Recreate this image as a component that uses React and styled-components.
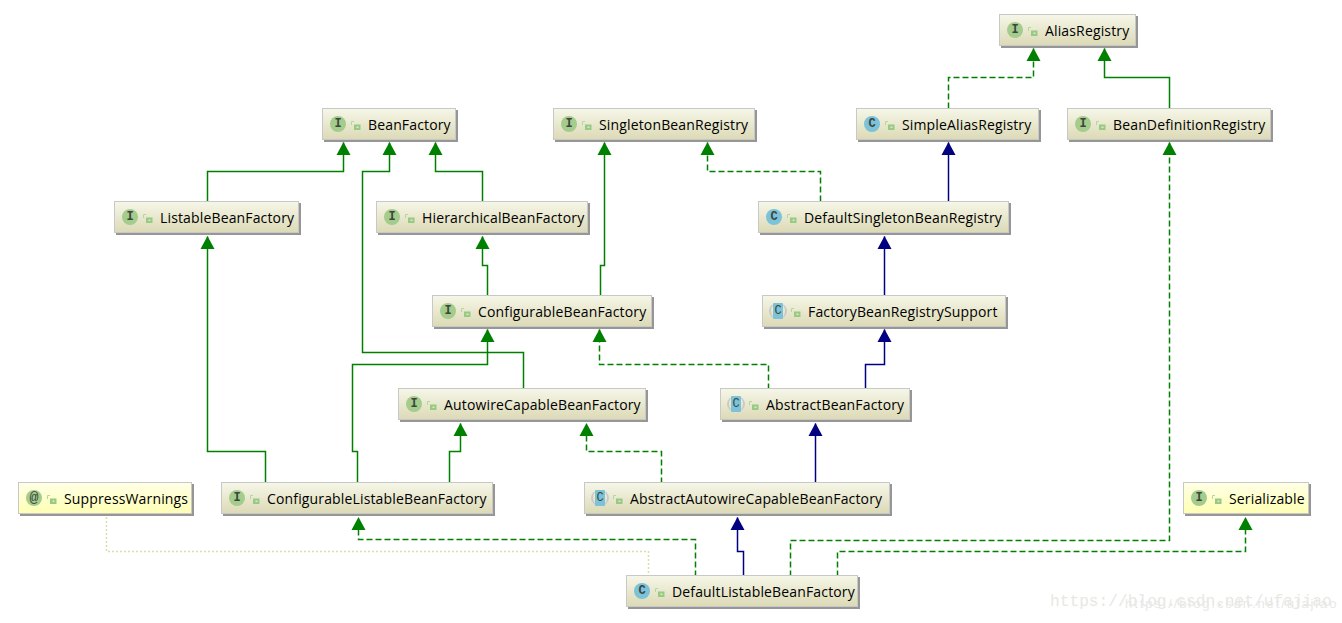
import React from "react";
import styled, { createGlobalStyle } from "styled-components";

const GREEN = "#008000";
const BLUE = "#000080";
const OLIVE = "#bcbc55";

const nodes = [
  { name: "AliasRegistry", kind: "I", x: 999, y: 14, w: 137 },
  { name: "BeanFactory", kind: "I", x: 322, y: 108, w: 134 },
  { name: "SingletonBeanRegistry", kind: "I", x: 553, y: 108, w: 202 },
  { name: "SimpleAliasRegistry", kind: "C", x: 856, y: 108, w: 183 },
  { name: "BeanDefinitionRegistry", kind: "I", x: 1067, y: 108, w: 204 },
  { name: "ListableBeanFactory", kind: "I", x: 114, y: 201, w: 185 },
  { name: "HierarchicalBeanFactory", kind: "I", x: 376, y: 201, w: 212 },
  { name: "DefaultSingletonBeanRegistry", kind: "C", x: 758, y: 201, w: 251 },
  { name: "ConfigurableBeanFactory", kind: "I", x: 432, y: 295, w: 220 },
  { name: "FactoryBeanRegistrySupport", kind: "A", x: 762, y: 295, w: 244 },
  { name: "AutowireCapableBeanFactory", kind: "I", x: 398, y: 388, w: 248 },
  { name: "AbstractBeanFactory", kind: "A", x: 720, y: 388, w: 190 },
  { name: "SuppressWarnings", kind: "@", x: 18, y: 482, w: 174, note: true },
  { name: "ConfigurableListableBeanFactory", kind: "I", x: 221, y: 482, w: 272 },
  { name: "AbstractAutowireCapableBeanFactory", kind: "A", x: 584, y: 482, w: 306 },
  { name: "Serializable", kind: "I", x: 1183, y: 482, w: 126, note: true },
  { name: "DefaultListableBeanFactory", kind: "C", x: 626, y: 575, w: 232 },
];

// every edge runs from the child box up to the arrow tip under the parent
const edges = [
  { c: GREEN, dash: true, p: "948,108 948,77 1033,77 1033,48" },
  { c: GREEN, p: "1169,108 1169,77 1104,77 1104,48" },
  { c: GREEN, p: "207,201 207,171 343,171 343,142" },
  { c: GREEN, p: "523,389 523,352 362,352 362,171 389,171 389,142" },
  { c: GREEN, p: "482,201 482,171 435,171 435,142" },
  { c: GREEN, p: "600,295 600,265 604,265 604,142" },
  { c: GREEN, dash: true, p: "820,201 820,171 707,171 707,142" },
  { c: BLUE, p: "948,201 948,142" },
  { c: GREEN, dash: true, p: "790,576 790,540 1169,540 1169,142" },
  { c: BLUE, p: "884,295 884,236" },
  { c: GREEN, p: "487,295 487,265 482,265 482,236" },
  { c: GREEN, p: "265,483 265,451 207,451 207,236" },
  { c: GREEN, dash: true, p: "768,389 768,364 599,364 599,329" },
  { c: BLUE, p: "865,389 865,364 884,364 884,329" },
  { c: GREEN, p: "357,483 357,451 352,451 352,364 487,364 487,329" },
  { c: GREEN, p: "449,483 449,451 460,451 460,423" },
  { c: GREEN, dash: true, p: "661,483 661,451 586,451 586,423" },
  { c: BLUE, p: "815,483 815,423" },
  { c: BLUE, p: "743,576 743,551 737,551 737,517" },
  { c: GREEN, dash: true, p: "695,576 695,539 358,539 358,517" },
  { c: GREEN, dash: true, p: "837,576 837,551 1245,551 1245,517" },
  { c: OLIVE, dot: true, noArrow: true, p: "106,517 106,551 648,551 648,576" },
];

const GlobalStyle = createGlobalStyle`
  html, body {
    margin: 0;
    background: #ffffff;
  }
`;

const Canvas = styled.div`
  position: relative;
  width: 1342px;
  height: 623px;
  overflow: hidden;
  font-family: "Open Sans", sans-serif;
`;

const Edges = styled.svg`
  position: absolute;
  left: 0;
  top: 0;
`;

const Box = styled.div`
  position: absolute;
  left: ${(p) => p.$x}px;
  top: ${(p) => p.$y}px;
  width: ${(p) => p.$w}px;
  height: 32px;
  box-sizing: border-box;
  display: flex;
  align-items: center;
  padding-left: 6px;
  border: 1px solid #c8c8c8;
  box-shadow: 2px 2px 0 #969696;
  background: ${(p) =>
    p.$note
      ? "linear-gradient(#ffffe6, #ffffb4)"
      : "linear-gradient(#f6f6e8, #dcdab6)"};
`;

const Badge = styled.span`
  width: 16px;
  height: 16px;
  flex: none;
  display: flex;
  align-items: center;
  justify-content: center;
  border-radius: 50%;
  background: ${(p) => p.$bg};
  color: #3c463c;
  font-family: "Liberation Mono", monospace;
  font-size: ${(p) => (p.$at ? "15px" : "12px")};
  font-weight: ${(p) => (p.$at ? "normal" : "bold")};
`;

const BadgeSlot = styled.span`
  position: relative;
  width: 16px;
  height: 16px;
  margin-left: 1px;
  flex: none;
  display: flex;
  justify-content: center;
`;

const AbstractRing = styled.span`
  position: absolute;
  left: -1px;
  top: 0;
  width: 18px;
  height: 16px;
  box-sizing: border-box;
  border-radius: 50%;
  border-left: 2px solid #cacaca;
  border-right: 2px solid #cacaca;
`;

const AbstractFace = styled(Badge)`
  position: relative;
  width: 10px;
  border-radius: 1px;
  font-weight: normal;
`;

const Lock = styled.svg`
  margin: 3px 7px 0 5px;
  flex: none;
`;

const Name = styled.span`
  padding-top: 1px;
  font-size: 14px;
  letter-spacing: 0.15px;
  color: #000000;
  white-space: nowrap;
`;

const Watermark = styled.span`
  position: absolute;
  left: ${(p) => p.$x}px;
  top: ${(p) => p.$y}px;
  font-family: ${(p) => p.$font};
  font-size: ${(p) => p.$size}px;
  letter-spacing: ${(p) => p.$track}px;
  color: ${(p) => p.$color};
  white-space: nowrap;
`;

function KindIcon({ kind }) {
  if (kind === "A") {
    return (
      <BadgeSlot>
        <AbstractRing />
        <AbstractFace $bg="#7cc2d8">C</AbstractFace>
      </BadgeSlot>
    );
  }
  const bg = kind === "C" ? "#7cc2d8" : "#a4cc8c";
  return (
    <BadgeSlot>
      <Badge $bg={bg} $at={kind === "@"}>
        {kind}
      </Badge>
    </BadgeSlot>
  );
}

function LockIcon() {
  return (
    <Lock width="10" height="10" viewBox="0 0 10 10">
      <path d="M0.5 4V0.5H3" fill="none" stroke="#b4d6a0" strokeWidth="1" />
      <rect x="3" y="3.5" width="6.5" height="5.5" fill="#98ca84" />
      <rect x="5.5" y="5.5" width="2" height="1.5" fill="#d8ecc8" />
    </Lock>
  );
}

function Edge({ edge }) {
  const pts = edge.p.split(" ");
  const [tx, ty] = pts[pts.length - 1].split(",").map(Number);
  const dash = edge.dash ? "6 3" : edge.dot ? "1 3" : undefined;
  return (
    <g>
      <polyline
        points={edge.p}
        transform="translate(0.5 0.5)"
        fill="none"
        stroke={edge.c}
        strokeWidth="1.5"
        strokeDasharray={dash}
      />
      {!edge.noArrow && (
        <polygon
          points={`${tx + 0.5},${ty} ${tx - 6.5},${ty + 13} ${tx + 7.5},${ty + 13}`}
          fill={edge.c}
        />
      )}
    </g>
  );
}

export default function App() {
  return (
    <Canvas>
      <GlobalStyle />
      <Edges width="1342" height="623">
        {edges.map((edge) => (
          <Edge key={edge.p} edge={edge} />
        ))}
      </Edges>
      {nodes.map((n) => (
        <Box key={n.name} $x={n.x} $y={n.y} $w={n.w} $note={n.note}>
          <KindIcon kind={n.kind} />
          <LockIcon />
          <Name>{n.name}</Name>
        </Box>
      ))}
      <Watermark $x={1050} $y={593} $size={16.2} $track={0} $font={'"Liberation Mono", monospace'} $color="#e8e8e2">
        https://blog.csdn.net/ufajiao
      </Watermark>
      <Watermark $x={1125} $y={596} $size={13} $track={1.9} $font={'"Liberation Sans", sans-serif'} $color="#e8e8e8">
        https://blog.csdn.net/ufajiao
      </Watermark>
    </Canvas>
  );
}
